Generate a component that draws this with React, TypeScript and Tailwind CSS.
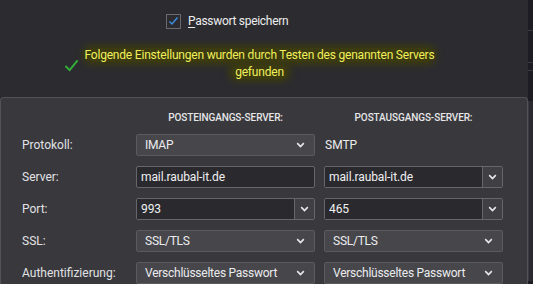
import React from "react";

const font = { fontFamily: "Roboto, 'Liberation Sans', sans-serif" };

function Chevron() {
  return (
    <svg width="9" height="6" viewBox="0 0 9 6" className="shrink-0">
      <path d="M1.2 1.2 L4.5 4.5 L7.8 1.2" fill="none" stroke="#e8e8ea" strokeWidth="1.7" />
    </svg>
  );
}

function Select({ value }: { value: string }) {
  return (
    <div className="flex h-[22px] items-center justify-between rounded-[2px] border border-[#5a5a5f] bg-[#46464b] pl-[8px] pr-[9px] text-[12px] tracking-[-0.25px] text-[#ececee]">
      <span>{value}</span>
      <Chevron />
    </div>
  );
}

function Input({ value }: { value: string }) {
  return (
    <div className="flex h-[22px] items-center rounded-[2px] border border-[#66666b] bg-[#2a2a2e] px-[4px] text-[12px] tracking-[-0.1px] text-[#f0f0f2]">
      {value}
    </div>
  );
}

function Combo({ value }: { value: string }) {
  return (
    <div className="flex h-[22px] rounded-[2px] border border-[#66666b] text-[12px] tracking-[-0.1px] text-[#f0f0f2]">
      <div className="flex flex-1 items-center bg-[#2a2a2e] px-[4px]">{value}</div>
      <div className="flex w-[20px] items-center justify-center border-l border-[#66666b] bg-[#3f3f44]">
        <Chevron />
      </div>
    </div>
  );
}

const rows: { label: string; left: React.ReactNode; right: React.ReactNode }[] = [
  {
    label: "Protokoll:",
    left: <Select value="IMAP" />,
    right: <div className="flex h-[22px] items-center pl-[1px] text-[12px] text-[#ececee]">SMTP</div>,
  },
  { label: "Server:", left: <Input value="mail.raubal-it.de" />, right: <Combo value="mail.raubal-it.de" /> },
  { label: "Port:", left: <Combo value="993" />, right: <Combo value="465" /> },
  { label: "SSL:", left: <Select value="SSL/TLS" />, right: <Select value="SSL/TLS" /> },
  {
    label: "Authentifizierung:",
    left: <Select value="Verschlüsseltes Passwort" />,
    right: <Select value="Verschlüsseltes Passwort" />,
  },
];

export default function App() {
  return (
    <div className="flex h-[284px] w-[533px] overflow-hidden bg-[#2c2c30]" style={font}>
      <div className="flex w-[528px] flex-col">
        {/* top */}
        <div className="flex h-[100px] flex-col">
          <div className="mt-[12px] flex items-center pl-[166px]">
            <div className="flex h-[15px] w-[15px] items-center justify-center border border-[#6a6a70] bg-[#2b2b30]">
              <svg width="11" height="10" viewBox="0 0 11 10">
                <path d="M1.5 5.5 L4 8 L9.5 1.5" fill="none" stroke="#3d8fe6" strokeWidth="1.4" />
              </svg>
            </div>
            <span className="ml-[7px] text-[12px] tracking-[-0.3px] text-[#ececee]">
              <span className="underline underline-offset-2">P</span>asswort speichern
            </span>
          </div>
          <div className="mt-[17px] flex items-center justify-center pr-[30px]">
            <svg width="15" height="15" viewBox="0 0 16 16" className="mr-[6px] mt-[2px] shrink-0">
              <path d="M1.5 8.5 L6 13 L14.5 2.5" fill="none" stroke="#33b13a" strokeWidth="2" />
            </svg>
            <p className="text-center text-[12px] leading-[17px] tracking-[-0.2px] text-[#f2f05a]">
              <span className="rounded-full bg-[#3b3a10] shadow-[0_0_6px_3px_#3b3a10]">
                Folgende Einstellungen wurden durch Testen des genannten Servers
              </span>
              <br />
              <span className="rounded-full bg-[#3b3a10] px-[4px] shadow-[0_0_6px_3px_#3b3a10]">gefunden</span>
            </p>
          </div>
        </div>
        {/* panel */}
        <div className="flex-1 rounded-t-[4px] border border-b-0 border-[#525257] bg-[#38383d] pl-[21px] pt-[14px]">
          <div className="grid grid-cols-[105px_179px_179px] gap-x-[9px] gap-y-[10px]">
            <div />
            <div className="text-center text-[10px] font-medium leading-[12px] tracking-[-0.1px] text-[#e6e6e8]">
              POSTEINGANGS-SERVER:
            </div>
            <div className="text-center text-[10px] font-medium leading-[12px] tracking-[-0.1px] text-[#e6e6e8]">
              POSTAUSGANGS-SERVER:
            </div>
            {rows.map((r) => (
              <React.Fragment key={r.label}>
                <div className="flex h-[22px] items-center whitespace-nowrap text-[12px] text-[#e2e2e4]">{r.label}</div>
                {r.left}
                {r.right}
              </React.Fragment>
            ))}
          </div>
        </div>
      </div>
      <div className="flex w-[5px] flex-col bg-[#1d1c22]">
        <div className="mt-[30px] h-px bg-[#3a3a40]" />
        <div className="mt-[31px] h-px bg-[#3a3a40]" />
        <div className="mt-[7px] h-px bg-[#3a3a40]" />
        <div className="mt-[30px] h-[180px] border-l border-[#3a3a40] bg-[#2a2a30]" />
      </div>
    </div>
  );
}
